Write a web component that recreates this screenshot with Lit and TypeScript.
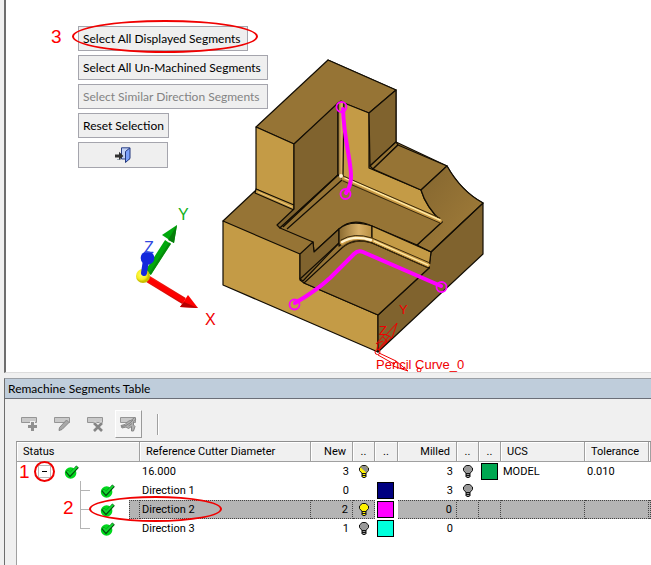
import { LitElement, html, css, svg, nothing } from "lit";
import { customElement, state } from "lit/decorators.js";
import { classMap } from "lit/directives/class-map.js";

type Bulb = "on" | "off" | "half";

interface Segment {
  name: string;
  isNew: number;
  newBulb?: Bulb;
  newColor?: string;
  milled: number;
  milledBulb?: Bulb;
  milledColor?: string;
  ucs?: string;
  tolerance?: string;
}

const cutter: Segment = {
  name: "16.000", isNew: 3, newBulb: "half", milled: 3, milledBulb: "off",
  milledColor: "#00a651", ucs: "MODEL", tolerance: "0.010",
};

const directions: Segment[] = [
  { name: "Direction 1", isNew: 0, newColor: "#000080", milled: 3, milledBulb: "off" },
  { name: "Direction 2", isNew: 2, newBulb: "on", newColor: "#ff00ff", milled: 0 },
  { name: "Direction 3", isNew: 1, newBulb: "off", newColor: "#00ffdc", milled: 0 },
];

const checkIcon = html`<svg class="check" viewBox="0 0 16 14" width="16" height="14" aria-label="Ready">
  <circle cx="6.6" cy="8" r="5.8" fill="#00d81c"/>
  <path d="M2.6 6L6 10L13.6 1.6" fill="none" stroke="#04500f" stroke-width="3.4"/>
  <path d="M3.2 5.8L6 9L13.2 1.6" fill="none" stroke="#14d830" stroke-width="2"/>
</svg>`;

const bulbIcon = (kind: Bulb) => {
  const fill = kind === "off" ? "#999" : "#fff200";
  return html`<svg class="bulb" viewBox="0 0 10 13" width="10" height="13" aria-label=${`Light ${kind}`}>
    <path d="M3.2 .5H6.8L9.5 3V5.6L6.8 8.5H3.2L.5 5.6V3Z" fill=${fill} stroke="#111"/>
    ${kind === "half" ? svg`<path d="M1.6 2.4L3.4 1H6.6L9 3.2V5.4L7.2 7.4Z" fill="#8e8e8e"/>` : nothing}
    <path d="M2.5 8H7.5V11.4L6 13H4L2.5 11.4Z" fill="#111"/>
    <path d="M3.7 9.5H6.3M3.7 11.5H6.3" stroke=${fill}/>
  </svg>`;
};

const tablet = svg`<path d="M.5 1.5H15.5V6.5H.5Z" fill="#c9c9c9" stroke="#959595"/>`;
const tools = [
  { label: "Add", art: svg`${tablet}<path d="M11.5 5V15M6 10.5H17" stroke="#efefef" stroke-width="5"/><path d="M11.5 6V15M7 10.5H16" stroke="#909090" stroke-width="3"/>` },
  { label: "Edit", art: svg`${tablet}<path d="M5 14.5L5.5 11.5L12.5 4L15 6.5L8 13.5Z" fill="#a8a8a8" stroke="#888"/>` },
  { label: "Delete", art: svg`${tablet}<path d="M6.5 7L15.5 15M15.5 7L6.5 15" stroke="#efefef" stroke-width="4.4"/><path d="M7 7L15 15M15 7L7 15" stroke="#858585" stroke-width="2.6"/>` },
  { label: "Pick segments", pressed: true, art: svg`${tablet}<path d="M1 9.5L5 8.5L8.5 5L11 4.5L14.5 1.5L16 3L13.5 6V9L15 10.5L13.5 15H11.5V10.5L8.5 12.5L6 11L2 12Z" fill="#b0b0b0" stroke="#858585"/><path d="M2 10.5L6 9.5L10 7L13 4M8.5 10L12 7.5" stroke="#858585" fill="none"/>` },
];

const scene = svg`
  <defs>
    <linearGradient id="round" x1="0" x2="1"><stop offset="0" stop-color="#8a6a30"/><stop offset=".6" stop-color="#d8b068"/><stop offset="1" stop-color="#b98f42"/></linearGradient>
    <linearGradient id="scoop" x1="0" y1="0" x2="1" y2="1"><stop offset="0" stop-color="#83652f"/><stop offset="1" stop-color="#a37e3a"/></linearGradient>
    <linearGradient id="redrod" x1="0" y1="1" x2=".5" y2="0"><stop offset="0" stop-color="#c00000"/><stop offset="1" stop-color="#ff1a10"/></linearGradient>
    <radialGradient id="ball" cx=".4" cy=".4"><stop offset="0" stop-color="#ffff70"/><stop offset=".7" stop-color="#f7ee20"/><stop offset="1" stop-color="#c9c000"/></radialGradient>
  </defs>
  <g stroke="#120d04" stroke-width="1.2" stroke-linejoin="round">
    <path fill="#967435" d="M223 221L255 191L294 207L328 60L396 90V142L447 166Q461 191 483 203L378 315L300 283Z"/>
    <path fill="#c49b46" d="M223 221L300 254V280L304 283L378 315V352L223 285Z"/>
    <path fill="#80632e" d="M378 315L429 268L431 252L483 203V254L378 352Z"/>
    <path fill="#967435" d="M256 127L328 60L396 90L369 113L341 102L294 144Z"/>
    <path fill="#c49b46" d="M256 127L294 144V207L256 189Z"/>
    <path fill="#c49b46" d="M256 189L294 205V210L255 193Z"/>
    <path fill="#80632e" d="M294 144L338 103V175L280 228L277 225L294 209Z"/>
    <path fill="url(#round)" d="M338 103L341 101L344 103V178L338 175Z"/>
    <path fill="#c49b46" d="M344 103L369 113V168L421 190Q426 207 442 222L343 176Z"/>
    <path fill="#80632e" d="M369 113L396 90V142L370 166Z"/>
    <path fill="#967435" d="M370 166L396 142L398 145L373 169Z"/>
    <path fill="#967435" d="M373 169L398 145L447 166L421 190Z"/>
    <path fill="url(#scoop)" d="M421 190L447 166Q461 191 483 203L442 239L432 247L417 245L442 222Q426 207 421 190Z" stroke="none"/>
    <path fill="none" d="M421 190L447 166Q461 191 483 203M421 190Q426 207 442 222L417 245"/>
    <path fill="#967435" d="M338 175L342 178L442 222L417 245L372 226Q352 217 339 229L314 252L313 242L280 228Z"/>
    <path fill="#80632e" d="M300 254L313 242L314 252L339 229V243L303 281L300 279Z"/>
    <path fill="url(#round)" d="M339 229Q350 219 372 226V243Q352 235 339 246Z"/>
    <path fill="#c49b46" d="M372 226L431 252L429 268L372 243Z"/>
    <path fill="#967435" d="M304 283L343 247Q355 237 372 243L429 268L378 315Z"/>
    <path fill="none" d="M300 279L339 243M287 229L342 180M283 227L338 175"/>
    <path fill="none" d="M431 252L483 203M417 245L431 252M338 175L442 222"/>
  </g>
  <g fill="none" stroke-linecap="round">
    <path d="M344 178L440 221" stroke="#c99a45" stroke-width="4"/>
    <path d="M345 178L440 220" stroke="#ffe7a0" stroke-width="1.4"/>
    <path d="M343 176L440 218M343 181L440 223" stroke="#3b2a0c" stroke-width="1"/>
    <path d="M342 243Q354 235 372 240L428 265" stroke="#c99a45" stroke-width="4"/>
    <path d="M342 242Q354 235 371 240" stroke="#fff3cf" stroke-width="2.4"/>
    <path d="M374 241L428 265" stroke="#ffe7a0" stroke-width="1.4"/>
    <path d="M341 240Q354 232 372 238L430 263M343 247Q355 238 372 243L428 268" stroke="#3b2a0c" stroke-width="1"/>
    <path d="M258 192L292 207" stroke="#f0c878" stroke-width="1"/>
  </g>
  <circle cx="341" cy="176" r="2" fill="#fff3cf"/>
  <g fill="none" stroke="#ff00ff" stroke-linecap="round" stroke-linejoin="round">
    <path stroke-width="4" d="M343 109C344 140 351 160 351 176C351 184 349 189 346 193"/>
    <path stroke-width="4" d="M295 303Q316 291 330 278L354 254Q358 250 363 252L441 286"/>
    <g stroke-width="1.8"><circle cx="341.5" cy="107" r="5"/><circle cx="345.5" cy="194" r="5"/><circle cx="294.5" cy="304.5" r="5"/><circle cx="441.5" cy="287" r="5"/></g>
  </g>
  <g>
    <path d="M148 273L168 242" stroke="#00a80c" stroke-width="7"/>
    <path d="M150 274L170 243" stroke="#078a0c" stroke-width="2"/>
    <path d="M177 225L162 235L174 243Z" fill="#00a80c"/><path d="M177 225L168 240L174 243Z" fill="#067d0a"/>
    <path d="M148 279L184 301" stroke="url(#redrod)" stroke-width="7"/>
    <path d="M148 279L184 301" stroke="#f00" stroke-width="4"/>
    <path d="M198 308L180 307L188 295Z" fill="#f00"/><path d="M198 308L180 307L184 302Z" fill="#b80000"/>
    <circle cx="143" cy="276" r="7" fill="url(#ball)"/>
    <path d="M144 273L146 260" stroke="#1428dc" stroke-width="6" stroke-linecap="round"/>
    <circle cx="147.5" cy="258" r="6.8" fill="#1428dc"/>
  </g>
  <g class="axis">
    <text x="205" y="325" fill="#f00000">X</text>
    <text x="178" y="220" fill="#10b020">Y</text>
    <text x="144" y="253" fill="#3048e0">Z</text>
  </g>
  <g fill="none" stroke="#f00000">
    <circle cx="377.5" cy="352" r="2.5"/>
    <path d="M378 350L389 336L386 335L397 323L392 338L389 336M379 350L391 338M377 349L378 343L383 341M376 344L385 334M381 346L387 341L383 337M379 353L396 361M378 355L394 364M396 361L393 366L408 371Z"/>
    <circle cx="419" cy="370" r="2"/>
  </g>
  <g fill="#f00000">
    <text class="small" x="399" y="314">Y</text>
    <text class="small" x="379" y="335">Z</text>
    <text class="small" x="376" y="369">Pencil Curve_0</text>
  </g>`;

@customElement("app-root")
export class AppRoot extends LitElement {
  @state() private open = true;
  @state() private selected = 1;

  static styles = css`
    :host { display: block; min-height: 100vh; padding-left: 4px; box-sizing: border-box; background: #f0f0f0; color: #000; font: 12px/16px Lato, sans-serif; }
    button { font: inherit; color: inherit; padding: 0; }
    .view { display: grid; background: #fff; border-left: 2px solid #6e6e6e; border-bottom: 1px solid #dcdcdc; overflow: hidden; }
    .view > * { grid-area: 1 / 1; }
    .scene { display: block; width: 100%; height: 372px; }
    .axis text { font: 16px "Liberation Sans", sans-serif; }
    .small { font: 13px "Liberation Sans", sans-serif; }
    .menu { z-index: 1; justify-self: start; align-self: start; display: grid; justify-items: start; gap: 4px; padding: 26px 0 0 72px; }
    .menu .cell { position: relative; display: grid; }
    .menu button { height: 25px; min-width: 90px; padding: 0 4px; border: 1px solid #a5a5ad; background: #efefef; text-align: left; white-space: nowrap; }
    .menu .w-mid { width: 170px; }
    .menu .w-wide { width: 190px; }
    .menu button:disabled { color: #838383; }
    .menu .exit { height: 26px; display: grid; place-items: center; }
    .mark { position: absolute; box-sizing: border-box; border: 2px solid #f00000; border-radius: 50%; pointer-events: none; z-index: 2; }
    .num { position: absolute; font: 19px/20px "Liberation Sans", sans-serif; color: #f00; z-index: 2; pointer-events: none; }
    .num-3 { left: -27px; top: 1px; }
    .mark-3 { left: -6px; right: -10px; top: -6px; bottom: -2px; }
    .panel { margin-top: 5px; border-left: 1px solid #6e6e6e; border-top: 1px solid #9a9fa5; }
    h2 { margin: 0; height: 19px; padding-left: 3px; background: #bfcddb; border-bottom: 1px solid #6b6f78; font: inherit; line-height: 19px; }
    .tools { display: flex; align-items: center; gap: 6px; padding: 11px 0 3px 11px; }
    .tools button { box-sizing: border-box; width: 27px; height: 28px; display: grid; place-items: center; border: 1px solid transparent; background: none; }
    .tools .pressed { border-color: #fff #999 #999 #fff; background: #f4f4f4; }
    .rule { width: 1px; height: 21px; margin-left: 9px; background: #a0a0a0; border-right: 1px solid #fff; }
    .grid { margin-left: 11px; min-height: 124px; background: #fff; border-left: 1px solid #a0a0a0; border-top: 1px solid #8e8e8e; overflow: hidden; }
    table { width: 100%; table-layout: fixed; border-collapse: separate; border-spacing: 0; font: 11px/14px Roboto, sans-serif; }
    th, td { box-sizing: border-box; height: 19px; padding: 0; text-align: left; font-weight: 400; white-space: nowrap; }
    th { height: 20px; padding: 0 6px; background: #f0f0f0; border-right: 1px solid #a0a0a0; border-bottom: 1px solid #a0a0a0; box-shadow: inset 1px 1px #fff; }
    .c-status { width: 123px; } .c-name { width: 171px; } .c-new { width: 42px; } .c-dot { width: 22px; } .c-paint { width: 23px; } .c-milled { width: 59px; } .c-ucs { width: 84px; } .c-tol { width: 64px; }
    .right { text-align: right; }
    td.right { padding-right: 4px; }
    .mid { text-align: center; padding: 0; }
    td.txt { padding-left: 2px; }
    .status { position: relative; }
    .node { display: flex; align-items: center; height: 19px; }
    .toggle { position: relative; box-sizing: border-box; width: 13px; height: 13px; margin: 0 13px 0 21px; border: 1px solid #b8b8b8; background: #fff; display: grid; place-items: center; }
    .check, .bulb { display: block; }
    .bulb { margin-left: 6px; }
    .branch { align-self: stretch; width: 9px; margin: 0 10px 0 63px; border-left: 1px solid #b4b4b4; background: linear-gradient(#b4b4b4, #b4b4b4) 0 9px / 9px 1px no-repeat; }
    .last .branch { height: 9px; align-self: flex-start; border-bottom: 1px solid #b4b4b4; background: none; }
    .swatch { box-sizing: border-box; display: block; width: 17px; height: 17px; margin-left: 2px; border: 1px solid #000; }
    .sel td { background: #b4b4b4; border: 1px dotted #444; border-left-width: 0; }
    .sel .status { background: linear-gradient(#b4b4b4, #b4b4b4) 112px 0 no-repeat #fff; border-color: transparent; border-width: 0; }
    .sel .status::before { content: ""; position: absolute; left: 112px; right: 0; top: 0; bottom: 0; border: 1px dotted #444; }
    .sel .paint { background: #fff; border: 0; }
    .mark-1 { left: -5px; top: -5px; width: 21px; height: 21px; }
    .num-1 { left: 2px; top: 0; }
    .mark-2 { left: 72px; top: -4px; width: 133px; height: 26px; }
    .num-2 { left: 46px; top: -2px; }
  `;

  private cells(s: Segment) {
    return html`
      <td class="txt">${s.name}</td>
      <td class="right">${s.isNew}</td>
      <td>${s.newBulb ? bulbIcon(s.newBulb) : nothing}</td>
      <td class="paint">${s.newColor ? html`<span class="swatch" style="background:${s.newColor}"></span>` : nothing}</td>
      <td class="right">${s.milled}</td>
      <td>${s.milledBulb ? bulbIcon(s.milledBulb) : nothing}</td>
      <td>${s.milledColor ? html`<span class="swatch" style="background:${s.milledColor}"></span>` : nothing}</td>
      <td class="txt">${s.ucs}</td>
      <td class="txt">${s.tolerance}</td>
      <td></td>`;
  }

  render() {
    return html`
      <section class="view">
        <svg class="scene" viewBox="6 0 645 372" role="img" aria-label="Machined part with pencil curves">${scene}</svg>
        <div class="menu">
          <div class="cell">
            <button class="w-mid">Select All Displayed Segments</button>
            <span class="num num-3">3</span><span class="mark mark-3"></span>
          </div>
          <button class="w-wide">Select All Un-Machined Segments</button>
          <button class="w-wide" disabled>Select Similar Direction Segments</button>
          <button>Reset Selection</button>
          <button class="exit" aria-label="Exit">
            <svg viewBox="0 0 16 16" width="16" height="16">
              <path d="M6.5 12V.8H14.5V12Z" fill="#c3d2f4" stroke="#2a3f86"/>
              <path d="M2 12.5H6" stroke="#9ab" />
              <path d="M10.5 4.5L15 .8V11.5L10.5 15.5Z" fill="#7ba0fa" stroke="#22377c"/>
              <path d="M0 7.5H4V4.8L8.4 9L4 13V10.5H0Z" fill="#303030"/>
            </svg>
          </button>
        </div>
      </section>
      <section class="panel">
        <h2>Remachine Segments Table</h2>
        <div class="tools">
          ${tools.map((t) => html`<button class=${classMap({ pressed: !!t.pressed })} aria-label=${t.label}>
            <svg viewBox="0 0 17 16" width="17" height="16">${t.art}</svg></button>`)}
          <span class="rule"></span>
        </div>
        <div class="grid">
          <table>
            <colgroup>
              <col class="c-status"><col class="c-name"><col class="c-new"><col class="c-dot"><col class="c-paint">
              <col class="c-milled"><col class="c-dot"><col class="c-dot"><col class="c-ucs"><col class="c-tol"><col>
            </colgroup>
            <thead><tr>
              <th>Status</th><th>Reference Cutter Diameter</th><th class="right">New</th><th class="mid">..</th><th class="mid">..</th>
              <th class="right">Milled</th><th class="mid">..</th><th class="mid">..</th><th>UCS</th><th>Tolerance</th><th></th>
            </tr></thead>
            <tbody>
              <tr>
                <td class="status"><div class="node">
                  <span class="num num-1">1</span>
                  <button class="toggle" aria-label="Toggle directions" aria-expanded=${this.open} @click=${() => (this.open = !this.open)}>
                    <svg viewBox="0 0 7 7" width="7" height="7"><path d=${this.open ? "M1 3.5H6" : "M1 3.5H6M3.5 1V6"} stroke="#000"/></svg>
                    <span class="mark mark-1"></span></button>
                  ${checkIcon}</div></td>
                ${this.cells(cutter)}
              </tr>
              ${this.open ? directions.map((d, i) => html`
                <tr class=${classMap({ sel: i === this.selected, last: i === directions.length - 1 })} @click=${() => (this.selected = i)}>
                  <td class="status"><div class="node"><span class="branch"></span>${checkIcon}</div>
                    ${i === 1 ? html`<span class="num num-2">2</span><span class="mark mark-2"></span>` : nothing}</td>
                  ${this.cells(d)}
                </tr>`) : nothing}
            </tbody>
          </table>
        </div>
      </section>`;
  }
}
